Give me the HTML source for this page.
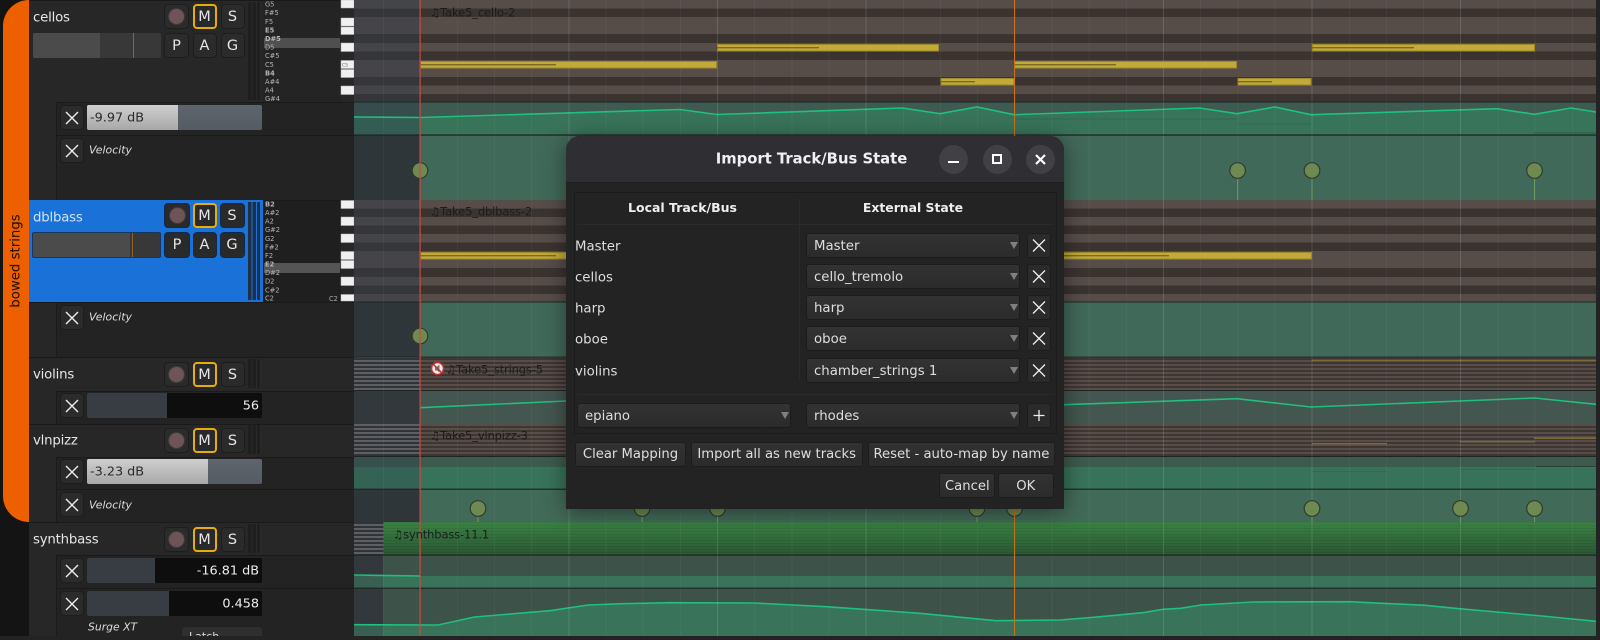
<!DOCTYPE html>
<html><head><meta charset="utf-8"><title>Import Track/Bus State</title>
<style>
*{box-sizing:border-box}
html,body{margin:0;padding:0;width:1600px;height:640px;overflow:hidden;background:#232323}
body{position:relative;font-family:"DejaVu Sans","Liberation Sans",sans-serif;color:#e4e4e4}
.a{position:absolute}
.t{position:absolute;white-space:nowrap;line-height:1;transform:translateY(-50%);margin-top:1px}
.name{font-size:13.3px;letter-spacing:-.2px;color:#e6e6e6;left:33px}
.vel{font-size:10.9px;font-style:italic;color:#ddd;left:89px}
.btn{position:absolute;background:#2b2b2b;border:1px solid #1d1d1d;border-radius:4px;height:25px;width:24px;display:flex;align-items:center;justify-content:center;font-size:14.5px;color:#e6e6e6}
.m{border:2px solid #e6ae0c;background:#292929;border-radius:4px}
.rec::after{content:"";width:15px;height:15px;border-radius:50%;background:#6e5357;border:1px solid #3c3c3c}
.blue .btn{border-color:#0c2a50;background:#2a2a2a}
.blue .m{border-color:#e6ae0c}
.x{width:24px;height:25px;left:60px}
.x svg,.dx svg{display:block}
.sl{position:absolute;left:87px;width:175px;height:25px;border-radius:2px;overflow:hidden;background:#0e0e0e;font-size:12.8px}
.sl i{position:absolute;left:0;top:0;bottom:0;background:#373d43}
.sl b{position:absolute;top:54%;transform:translateY(-50%);font-weight:normal;right:3px;color:#eee;line-height:1;white-space:nowrap}
.sl.w{background:linear-gradient(#5f656d,#555b63)}
.sl.w i{background:linear-gradient(#cfcfcf,#a8a8a8)}
.sl.w b{right:auto;left:3px;color:#2a2a2a}
.fad{position:absolute;left:33px;width:128px;height:25px;background:#383838;border-radius:2px;overflow:hidden}
.fad i{position:absolute;left:0;top:0;bottom:0;background:#4b4b4b}
.fad u{position:absolute;left:100px;top:0;bottom:0;width:1px;background:#8d6334}
.met{position:absolute;left:248px;width:13px;background:repeating-linear-gradient(90deg,#1f1f1f 0 3.4px,#2a2a2a 3.4px 4.4px)}
.take{font-size:11.5px;letter-spacing:-.15px;color:#1c1c1c}
.dlg{position:absolute;left:566px;top:136px;width:498px;height:373px;background:#232323;border-radius:14px 14px 0 0;box-shadow:0 3px 22px rgba(0,0,0,.45);overflow:hidden}
.hd{position:absolute;left:0;top:0;width:498px;height:47px;background:#2e2e33;border-bottom:1px solid #1d1d1f}
.wb{position:absolute;top:8.5px;width:29px;height:29px;border-radius:50%;background:#404045}
.cmb{position:absolute;width:214px;height:25px;background:linear-gradient(#333,#2b2b2b);border:1px solid #1c1c1c;border-radius:3px;font-size:13.3px;color:#dedede;padding-left:7px;line-height:25px}
.cmb::after{content:"";position:absolute;right:1px;top:8px;border-left:4.5px solid transparent;border-right:4.5px solid transparent;border-top:7px solid #808080}
.dx{position:absolute;left:461px;width:24px;height:25px;background:#2b2b2b;border:1px solid #1d1d1d;border-radius:3px}
.lb{position:absolute;left:9px;font-size:13.3px;color:#dedede;line-height:1;transform:translateY(-50%);white-space:nowrap;margin-top:1px}
.pb{position:absolute;height:25px;background:linear-gradient(#323232,#2b2b2b);border:1px solid #1d1d1d;border-radius:3px;font-size:13.2px;color:#dedede;display:flex;align-items:center;justify-content:center;white-space:nowrap;padding-top:1px}
</style></head><body>

<!-- timeline -->
<svg class="a" style="left:0;top:0" width="1600" height="640" viewBox="0 0 1600 640" font-family="DejaVu Sans">
<defs>
<pattern id="sr" width="10" height="4" patternUnits="userSpaceOnUse"><rect width="10" height="4" fill="#3f3633"/><rect width="10" height="2" fill="#574d49"/></pattern>
<pattern id="sl" width="10" height="4" patternUnits="userSpaceOnUse"><rect width="10" height="4" fill="#303439"/><rect width="10" height="2" fill="#5d5f62"/></pattern>
<pattern id="sg" width="10" height="3" patternUnits="userSpaceOnUse"><rect width="10" height="1" fill="#000" opacity=".06"/></pattern>
<linearGradient id="gg" x1="0" y1="0" x2="0" y2="1"><stop offset="0" stop-color="#3a8245"/><stop offset="1" stop-color="#2a5632"/></linearGradient>
</defs>
<rect x="354" y="0" width="1242" height="636" fill="#32373c"/>
<!-- cellos -->
<rect x="354" y="0" width="1242" height="102" fill="#3b3330"/>
<g fill="#564d49"><rect x="354" y="0" width="1242" height="8.5"/><rect x="354" y="17" width="1242" height="17"/><rect x="354" y="43" width="1242" height="8.5"/><rect x="354" y="60" width="1242" height="17"/><rect x="354" y="85.5" width="1242" height="8.5"/></g>
<rect x="354" y="0" width="66" height="102" fill="#2d3c4b" opacity=".42"/>
<!-- cellos auto -->
<rect x="354" y="102" width="1242" height="33" fill="#3f5a50"/>
<polygon fill="#38745a" points="354,117 420,117.5 680,109.5 717,114.5 902.5,108 940,113.7 977,107 1014,114.7 1199.5,108 1237,113.7 1274.5,107 1311,114.7 1497,108.7 1534.5,114.3 1571,108 1596,112 1596,134 354,134"/>
<rect x="354" y="102" width="66" height="33" fill="#2d3c4b" opacity=".42"/>
<polyline fill="none" stroke="#1fbf7f" stroke-width="1.6" points="354,117 420,117.5 680,109.5 717,114.5 902.5,108 940,113.7 977,107 1014,114.7 1199.5,108 1237,113.7 1274.5,107 1311,114.7 1497,108.7 1534.5,114.3 1571,108 1596,112"/>
<g fill="#326650"><rect x="1014" y="118.5" width="223" height="1"/><rect x="1238" y="123.5" width="74" height="1"/><rect x="1534" y="132" width="62" height="3"/></g>
<!-- cellos vel -->
<rect x="420" y="135" width="1176" height="65" fill="#41695a"/>
<rect x="354" y="135" width="66" height="65" fill="#2e3639"/>
<!-- dblbass -->
<rect x="354" y="200" width="1242" height="102" fill="#3b3330"/>
<g fill="#564d49"><rect x="354" y="200" width="1242" height="8.5"/><rect x="354" y="217" width="1242" height="8.5"/><rect x="354" y="234" width="1242" height="8.5"/><rect x="354" y="251" width="1242" height="17"/><rect x="354" y="277" width="1242" height="8.5"/><rect x="354" y="294" width="1242" height="8"/></g>
<rect x="354" y="200" width="66" height="102" fill="#2d3c4b" opacity=".42"/>
<!-- dblbass vel -->
<rect x="420" y="302" width="1176" height="55" fill="#41695a"/>
<rect x="354" y="302" width="66" height="55" fill="#2e3639"/>
<!-- violins -->
<rect x="420" y="357" width="1176" height="33" fill="url(#sr)"/>
<rect x="354" y="357" width="66" height="33" fill="url(#sl)"/>
<rect x="1312" y="359.6" width="284" height="1.4" fill="#7c6a3c"/>
<!-- violins auto -->
<rect x="420" y="390" width="1176" height="34" fill="#43564f"/>
<rect x="354" y="390" width="66" height="34" fill="#33383d"/>
<polyline fill="none" stroke="#1fbf7f" stroke-width="1.6" points="420,407.7 566,401 1064,404.7 1237,398.7 1311,407 1534.5,398 1596,404.3"/>
<!-- vlnpizz -->
<rect x="420" y="424" width="1176" height="32" fill="url(#sr)"/>
<rect x="354" y="424" width="66" height="32" fill="url(#sl)"/>
<rect x="1312" y="443" width="75" height="1.4" fill="#7c6a3c"/><rect x="1460" y="441" width="75" height="1.4" fill="#7c6a3c"/><rect x="1534" y="437.4" width="62" height="1.6" fill="#7c6a3c"/>
<!-- vlnpizz auto -->
<rect x="354" y="456" width="1242" height="33" fill="#3d5a4e"/>
<rect x="354" y="467" width="1242" height="22" fill="#37735a"/>
<rect x="354" y="456" width="66" height="33" fill="#2d3c4b" opacity=".3"/>
<g fill="#326650"><rect x="1312" y="471" width="74" height="1"/><rect x="1461" y="469" width="74" height="1"/></g>
<rect x="1536" y="466" width="60" height="1" fill="#29423a"/>
<!-- vlnpizz vel -->
<rect x="420" y="489" width="1176" height="33" fill="#426a58"/>
<rect x="354" y="489" width="66" height="33" fill="#2e3639"/>
<!-- synthbass -->
<rect x="354" y="522" width="30" height="33" fill="url(#sl)"/>
<rect x="383.5" y="522" width="1212.5" height="33" fill="url(#gg)"/>
<rect x="383.5" y="522" width="1212.5" height="33" fill="url(#sg)"/>
<!-- synth auto 1 -->
<rect x="383" y="555" width="1213" height="33" fill="#3d5249"/>
<rect x="383" y="576" width="1213" height="12" fill="#38735a"/>
<rect x="354" y="555" width="29" height="33" fill="#32383c"/>
<rect x="354" y="576" width="29" height="12" fill="#385f52"/>
<polyline fill="none" stroke="#1fbf7f" stroke-width="1.6" points="354,575 420,576"/>
<!-- synth auto 2 -->
<rect x="383" y="588" width="1213" height="48" fill="#3d5249"/>
<rect x="354" y="588" width="29" height="48" fill="#32383c"/>
<polygon fill="#38735a" points="383,624.8 438,625 474.5,617 550,610.7 588,605 623,603.7 670,602.7 755,603 826,606.7 920,613.3 996,620.7 1060,620 1094,617.3 1142.6,612.7 1163,609.3 1180.5,608.3 1201,605 1253,602 1349,601.7 1425,605.3 1459,608.7 1542,616 1596,621.3 1596,636 383,636"/>
<rect x="354" y="624.7" width="29" height="11.3" fill="#385f52"/>
<polyline fill="none" stroke="#1fbf7f" stroke-width="1.6" points="354,624.7 438,625 474.5,617 550,610.7 588,605 623,603.7 670,602.7 755,603 826,606.7 920,613.3 996,620.7 1060,620 1094,617.3 1142.6,612.7 1163,609.3 1180.5,608.3 1201,605 1253,602 1349,601.7 1425,605.3 1459,608.7 1542,616 1596,621.3"/>
<!-- grid -->
<path d="M383.5 0V636M457.5 0V636M494.5 0V636M531.5 0V636M606 0V636M643 0V636M680.5 0V636M754.5 0V636M792 0V636M829 0V636M903.5 0V636M940.5 0V636M977.5 0V636M1052 0V636M1089 0V636M1126.5 0V636M1200.5 0V636M1238 0V636M1275 0V636M1349.5 0V636M1386.5 0V636M1423.5 0V636M1498 0V636M1535 0V636M1572.5 0V636" stroke="#fff" stroke-opacity=".04" fill="none"/>
<path d="M569 0V636M717.5 0V636M866 0V636M1014.5 0V636M1163.5 0V636M1312 0V636M1460.5 0V636" stroke="#fff" stroke-opacity=".13" stroke-width="1" fill="none"/>
<!-- separators -->
<g fill="#1e2624"><rect x="354" y="101.5" width="1242" height="1"/><rect x="354" y="134.5" width="1242" height="1.2"/><rect x="354" y="301.5" width="1242" height="1"/><rect x="354" y="356.6" width="1242" height="1"/><rect x="354" y="390" width="1242" height="1"/><rect x="354" y="456" width="1242" height="1"/><rect x="354" y="488.6" width="1242" height="1.2"/><rect x="354" y="554.5" width="1242" height="1.2"/><rect x="354" y="587.6" width="1242" height="1.2"/></g>
<!-- notes -->
<g fill="#c2aa38" stroke="#9c8a2c" stroke-width="1">
<rect x="420.5" y="61.5" width="296" height="6.5"/><rect x="717.5" y="44.5" width="221" height="6.5"/><rect x="941" y="78.5" width="73" height="6.5"/><rect x="1014.5" y="61.5" width="222" height="6.5"/><rect x="1238" y="78.5" width="73" height="6.5"/><rect x="1312.5" y="44.5" width="222" height="6.5"/>
<rect x="420.5" y="252.5" width="296" height="6.5"/><rect x="1014.5" y="252.5" width="297" height="6.5"/>
</g>
<g fill="#7a6a2a">
<rect x="420" y="64" width="136" height="1.4"/><rect x="717" y="47" width="102" height="1.4"/><rect x="941" y="81" width="34" height="1.4"/><rect x="1014" y="64" width="102" height="1.4"/><rect x="1238" y="81" width="34" height="1.4"/><rect x="1312" y="47" width="102" height="1.4"/>
<rect x="420" y="255" width="136" height="1.4"/><rect x="1014" y="255" width="155" height="1.4"/>
</g>
<!-- velocity stems and circles -->
<g stroke="#6d9a62" stroke-width="1" fill="none"><path d="M420 178V200M1237.6 178V200M1312 178V200M1534.5 178V200M478 517V522M642 517V522M717.5 517V522M977 517V522M1014.5 517V522M1312 517V522M1460.5 517V522M1534.5 517V522M420 345V357"/></g>
<g fill="#6f8a50" stroke="#2e3c30" stroke-width="1.2">
<circle cx="420" cy="170.5" r="7.8"/><circle cx="1237.6" cy="170.5" r="7.8"/><circle cx="1312" cy="170.5" r="7.8"/><circle cx="1534.5" cy="170.5" r="7.8"/>
<circle cx="420" cy="336" r="7.8"/>
<circle cx="478" cy="508.5" r="7.8"/><circle cx="642" cy="508.5" r="7.8"/><circle cx="717.5" cy="508.5" r="7.8"/><circle cx="977" cy="508.5" r="7.8"/><circle cx="1014.5" cy="508.5" r="7.8"/><circle cx="1312" cy="508.5" r="7.8"/><circle cx="1460.5" cy="508.5" r="7.8"/><circle cx="1534.5" cy="508.5" r="7.8"/>
</g>
<!-- playheads -->
<rect x="419.5" y="0" width="1.2" height="636" fill="#c84a46"/>
<rect x="1014" y="0" width="1.1" height="636" fill="#c8701e"/>
<!-- mute icon -->
<circle cx="437.5" cy="368.5" r="6" fill="#eee" stroke="#c23030" stroke-width="1.5"/>
<path d="M435 366.5h2l2.5-2v8l-2.5-2h-2z" fill="#777"/>
<path d="M433.3 364.3L441.7 372.7" stroke="#c23030" stroke-width="1.4"/>
<rect x="1596" y="0" width="4" height="640" fill="#232323"/>
</svg>

<div class="t take" style="left:430px;top:12px">♫Take5_cello-2</div>
<div class="t take" style="left:430px;top:211px">♫Take5_dblbass-2</div>
<div class="t take" style="left:446px;top:368.5px">♫Take5_strings-5</div>
<div class="t take" style="left:430px;top:435px">♫Take5_vlnpizz-3</div>
<div class="t take" style="left:393px;top:534px">♫synthbass-11.1</div>

<!-- left panel -->
<div class="a" style="left:0;top:0;width:29px;height:640px;background:#141414"></div>
<div class="a" style="left:3px;top:0;width:26px;height:522px;background:#ee5f00;border-radius:26px 0 0 26px"></div>
<div class="a" style="left:29px;top:0;width:325px;height:636px;background:#272727"></div>
<div class="a" style="left:0;top:636px;width:1600px;height:4px;background:#232323"></div>
<div class="t" style="left:16px;top:260px;font-size:13.3px;color:#1a0d00;transform:translate(-50%,-50%) rotate(-90deg)">bowed strings</div>

<!-- key area -->
<div class="a" style="left:263px;top:0;width:78px;height:102px;background:#242424"></div>
<div class="a" style="left:263px;top:200px;width:78px;height:102px;background:#1f1f1f"></div>
<div class="a" style="left:264px;top:38px;width:76px;height:10px;background:#4f4f4f"></div>
<div class="a" style="left:264px;top:263px;width:76px;height:10px;background:#555"></div>

<!-- auto row backgrounds -->
<div class="a" style="left:56px;top:102px;width:298px;height:98px;background:#232323;border-left:1px solid #1b1b1b"></div>
<div class="a" style="left:56px;top:302px;width:298px;height:55px;background:#232323;border-left:1px solid #1b1b1b"></div>
<div class="a" style="left:56px;top:391px;width:298px;height:33px;background:#232323;border-left:1px solid #1b1b1b"></div>
<div class="a" style="left:56px;top:457px;width:298px;height:65px;background:#232323;border-left:1px solid #1b1b1b"></div>
<div class="a" style="left:56px;top:555px;width:298px;height:81px;background:#232323;border-left:1px solid #1b1b1b"></div>
<svg class="a" style="left:0;top:0" width="354" height="640">
<g fill="#1a1a1a"><rect x="29" y="0" width="325" height="1"/><rect x="56" y="102" width="298" height="1"/><rect x="56" y="135" width="298" height="1"/><rect x="29" y="200" width="325" height="1"/><rect x="29" y="302" width="325" height="1"/><rect x="29" y="357" width="325" height="1"/><rect x="56" y="391" width="298" height="1"/><rect x="29" y="424" width="325" height="1"/><rect x="56" y="457" width="298" height="1"/><rect x="56" y="489" width="298" height="1"/><rect x="29" y="522" width="325" height="1"/><rect x="56" y="555" width="298" height="1"/><rect x="56" y="588" width="298" height="1"/></g>
<!-- keys -->
<g fill="#f0f0f0" stroke="#b8b8b8" stroke-width=".5">
<rect x="341" y="0" width="13" height="8"/><rect x="341" y="18" width="13" height="8"/><rect x="341" y="27" width="13" height="7.5"/><rect x="341" y="43" width="13" height="8.5"/><rect x="341" y="60.5" width="13" height="8"/><rect x="341" y="69.5" width="13" height="8"/><rect x="341" y="86" width="13" height="8.5"/>
<rect x="341" y="200.5" width="13" height="8"/><rect x="341" y="217" width="13" height="8.5"/><rect x="341" y="234" width="13" height="8.5"/><rect x="341" y="251.5" width="13" height="8"/><rect x="341" y="260.5" width="13" height="8"/><rect x="341" y="277" width="13" height="8.5"/><rect x="341" y="294.5" width="13" height="6.5"/>
</g>
<g font-family="DejaVu Sans" font-size="6.7" fill="#b4b4b4" text-anchor="start">
<text x="265" y="6.5">G5</text><text x="265" y="15">F#5</text><text x="265" y="23.8">F5</text><text x="265" y="32.3" font-weight="bold">E5</text><text x="265" y="41" font-weight="bold">D#5</text><text x="265" y="49.5">D5</text><text x="265" y="58.2">C#5</text><text x="265" y="66.8">C5</text><text x="265" y="75.3" font-weight="bold">B4</text><text x="265" y="84">A#4</text><text x="265" y="92.5">A4</text><text x="265" y="101">G#4</text>
<text x="265" y="206.5" font-weight="bold">B2</text><text x="265" y="215">A#2</text><text x="265" y="223.5">A2</text><text x="265" y="232.2">G#2</text><text x="265" y="240.8">G2</text><text x="265" y="249.4">F#2</text><text x="265" y="258">F2</text><text x="265" y="266.5" font-weight="bold">E2</text><text x="265" y="275">D#2</text><text x="265" y="283.7">D2</text><text x="265" y="292.3">C#2</text><text x="265" y="300.7">C2</text>
<text x="329" y="301" fill="#aaa">C2</text><text x="342" y="66.5" font-size="4.5" fill="#666">C5</text>
</g>
</svg>

<!-- cellos -->
<div class="t name" style="top:17px">cellos</div>
<div class="btn rec" style="left:164px;top:4px;width:25px"></div>
<div class="btn m" style="left:192.5px;top:4px">M</div>
<div class="btn" style="left:220.5px;top:4px">S</div>
<div class="fad" style="top:33px"><i style="width:67px"></i><u></u></div>
<div class="btn" style="left:164px;top:33px;width:25px">P</div>
<div class="btn" style="left:192.5px;top:33px">A</div>
<div class="btn" style="left:220.5px;top:33px">G</div>
<div class="met" style="top:2px;height:98px"></div>

<div class="btn x" style="top:105px"><svg width="14" height="14"><path d="M1 1L13 13M13 1L1 13" stroke="#eee" stroke-width="1.4"/></svg></div>
<div class="sl w" style="top:105px"><i style="width:91px"></i><b>-9.97 dB</b></div>
<div class="btn x" style="top:138px"><svg width="14" height="14"><path d="M1 1L13 13M13 1L1 13" stroke="#eee" stroke-width="1.4"/></svg></div>
<div class="t vel" style="top:150px">Velocity</div>

<!-- dblbass -->
<div class="a blue" style="left:29px;top:200px;width:234px;height:102px;background:#1a72d8">
 <div class="t" style="left:4px;top:17px;font-size:13.3px;letter-spacing:-.2px;color:#cfe3fa">dblbass</div>
 <div class="btn rec" style="left:135px;top:3px;width:26px"></div>
 <div class="btn m" style="left:163.5px;top:3px">M</div>
 <div class="btn" style="left:190.5px;top:3px;width:25px">S</div>
 <div class="fad" style="left:3px;top:32px;width:129px;height:26px;border:1px solid #14365f"><i style="width:97px"></i><u style="left:99px"></u></div>
 <div class="btn" style="left:135px;top:32px;width:26px;height:26px">P</div>
 <div class="btn" style="left:163.5px;top:32px;height:26px">A</div>
 <div class="btn" style="left:190.5px;top:32px;width:25px;height:26px">G</div>
 <div class="met" style="left:219px;top:2px;height:98px;width:12.5px;background:repeating-linear-gradient(90deg,#1d3048 0 3.4px,#1a72d8 3.4px 4.4px)"></div>
</div>
<div class="btn x" style="top:305px"><svg width="14" height="14"><path d="M1 1L13 13M13 1L1 13" stroke="#eee" stroke-width="1.4"/></svg></div>
<div class="t vel" style="top:317px">Velocity</div>

<!-- violins -->
<div class="t name" style="top:374px">violins</div>
<div class="btn rec" style="left:164px;top:362px;width:25px"></div>
<div class="btn m" style="left:192.5px;top:362px">M</div>
<div class="btn" style="left:220.5px;top:362px">S</div>
<div class="met" style="top:359px;height:29px"></div>
<div class="btn x" style="top:393px"><svg width="14" height="14"><path d="M1 1L13 13M13 1L1 13" stroke="#eee" stroke-width="1.4"/></svg></div>
<div class="sl" style="top:393px"><i style="width:80px"></i><b>56</b></div>

<!-- vlnpizz -->
<div class="t name" style="top:440px">vlnpizz</div>
<div class="btn rec" style="left:164px;top:428px;width:25px"></div>
<div class="btn m" style="left:192.5px;top:428px">M</div>
<div class="btn" style="left:220.5px;top:428px">S</div>
<div class="met" style="top:425px;height:29px"></div>
<div class="btn x" style="top:459px"><svg width="14" height="14"><path d="M1 1L13 13M13 1L1 13" stroke="#eee" stroke-width="1.4"/></svg></div>
<div class="sl w" style="top:459px"><i style="width:121px"></i><b>-3.23 dB</b></div>
<div class="btn x" style="top:492px"><svg width="14" height="14"><path d="M1 1L13 13M13 1L1 13" stroke="#eee" stroke-width="1.4"/></svg></div>
<div class="t vel" style="top:505px">Velocity</div>

<!-- synthbass -->
<div class="t name" style="top:539px">synthbass</div>
<div class="btn rec" style="left:164px;top:527px;width:25px"></div>
<div class="btn m" style="left:192.5px;top:527px">M</div>
<div class="btn" style="left:220.5px;top:527px">S</div>
<div class="met" style="top:524px;height:29px"></div>
<div class="btn x" style="top:558px"><svg width="14" height="14"><path d="M1 1L13 13M13 1L1 13" stroke="#eee" stroke-width="1.4"/></svg></div>
<div class="sl" style="top:558px"><i style="width:68px"></i><b>-16.81 dB</b></div>
<div class="btn x" style="top:591px"><svg width="14" height="14"><path d="M1 1L13 13M13 1L1 13" stroke="#eee" stroke-width="1.4"/></svg></div>
<div class="sl" style="top:591px"><i style="width:82px"></i><b>0.458</b></div>
<div class="t vel" style="left:88px;top:627px;font-size:10.8px">Surge XT</div>
<div class="a" style="left:182px;top:627px;width:80px;height:9px;background:#2f2f2f;border-radius:3px 3px 0 0;overflow:hidden"><span class="a" style="left:7px;top:4px;font-size:11px;line-height:1;color:#ddd">Latch</span></div>

<!-- dialog -->
<div class="dlg">
 <div class="hd"></div>
 <div class="t" style="left:245.5px;top:23px;font-size:14.8px;font-weight:bold;color:#f0f0f0;transform:translate(-50%,-50%)">Import Track/Bus State</div>
 <div class="wb" style="left:372.5px"><div class="a" style="left:9px;top:16.5px;width:11px;height:2.4px;background:#fff"></div></div>
 <div class="wb" style="left:416.5px"><div class="a" style="left:9.5px;top:9.5px;width:10px;height:10px;border:2.4px solid #fff"></div></div>
 <div class="wb" style="left:460.2px"><svg class="a" style="left:9px;top:9px" width="11" height="11"><path d="M1 1L10 10M10 1L1 10" stroke="#fff" stroke-width="2.2"/></svg></div>

 <div class="a" style="left:8px;top:56px;width:483px;height:242px;border:1px solid #1c1c1c"></div>
 <div class="a" style="left:11px;top:88px;width:477px;height:1px;background:#2a2a2a"></div>
 <div class="a" style="left:232.5px;top:63px;width:1px;height:183px;background:#2a2a2a"></div>
 <div class="a" style="left:11px;top:258px;width:477px;height:1px;background:#2a2a2a"></div>
 <div class="t" style="left:116.5px;top:71px;font-size:12.5px;font-weight:bold;color:#eee;transform:translate(-50%,-50%)">Local Track/Bus</div>
 <div class="t" style="left:347px;top:71px;font-size:12.4px;font-weight:bold;color:#eee;transform:translate(-50%,-50%)">External State</div>

 <div class="lb" style="top:110px">Master</div>
 <div class="lb" style="top:141px">cellos</div>
 <div class="lb" style="top:172.3px">harp</div>
 <div class="lb" style="top:203.3px">oboe</div>
 <div class="lb" style="top:234.7px">violins</div>

 <div class="cmb" style="left:240px;top:97px">Master</div>
 <div class="cmb" style="left:240px;top:128px">cello_tremolo</div>
 <div class="cmb" style="left:240px;top:159px">harp</div>
 <div class="cmb" style="left:240px;top:190px">oboe</div>
 <div class="cmb" style="left:240px;top:222px">chamber_strings 1</div>
 <div class="cmb" style="left:11px;top:267px">epiano</div>
 <div class="cmb" style="left:240px;top:267px">rhodes</div>

 <div class="dx" style="top:97px"><svg width="22" height="23"><path d="M5 5.5L17 17.5M17 5.5L5 17.5" stroke="#eee" stroke-width="1.3"/></svg></div>
 <div class="dx" style="top:128px"><svg width="22" height="23"><path d="M5 5.5L17 17.5M17 5.5L5 17.5" stroke="#eee" stroke-width="1.3"/></svg></div>
 <div class="dx" style="top:159px"><svg width="22" height="23"><path d="M5 5.5L17 17.5M17 5.5L5 17.5" stroke="#eee" stroke-width="1.3"/></svg></div>
 <div class="dx" style="top:190px"><svg width="22" height="23"><path d="M5 5.5L17 17.5M17 5.5L5 17.5" stroke="#eee" stroke-width="1.3"/></svg></div>
 <div class="dx" style="top:222px"><svg width="22" height="23"><path d="M5 5.5L17 17.5M17 5.5L5 17.5" stroke="#eee" stroke-width="1.3"/></svg></div>
 <div class="dx" style="top:267px"><svg width="22" height="23"><path d="M5.5 11.5H16.5M11 6V17" stroke="#eee" stroke-width="1.3"/></svg></div>

 <div class="pb" style="left:9px;top:305.5px;width:111px">Clear Mapping</div>
 <div class="pb" style="left:124.7px;top:305.5px;width:172px">Import all as new tracks</div>
 <div class="pb" style="left:301.7px;top:305.5px;width:187.5px">Reset - auto-map by name</div>
 <div class="pb" style="left:373.3px;top:337px;width:56px">Cancel</div>
 <div class="pb" style="left:432px;top:337px;width:55.5px">OK</div>
</div>
</body></html>
